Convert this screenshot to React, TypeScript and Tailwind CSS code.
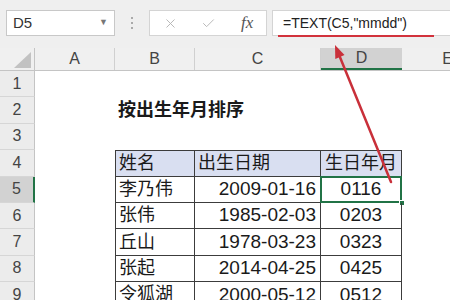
import { X, Check } from 'lucide-react';

const FONT = '"Liberation Sans", "Noto Sans CJK SC", sans-serif';

const COL_W = ['w-[35px]', 'w-[80px]', 'w-[80px]', 'w-[126px]', 'w-[81px]', 'w-[92px]'];
const COL_NAMES = ['', 'A', 'B', 'C', 'D', 'E'];

type Row = { num: number; cells: string[] };

const rows: Row[] = [
  { num: 1, cells: ['', '', '', '', ''] },
  { num: 2, cells: ['', '按出生年月排序', '', '', ''] },
  { num: 3, cells: ['', '', '', '', ''] },
  { num: 4, cells: ['', '姓名', '出生日期', '生日年月', ''] },
  { num: 5, cells: ['', '李乃伟', '2009-01-16', '0116', ''] },
  { num: 6, cells: ['', '张伟', '1985-02-03', '0203', ''] },
  { num: 7, cells: ['', '丘山', '1978-03-23', '0323', ''] },
  { num: 8, cells: ['', '张起', '2014-04-25', '0425', ''] },
  { num: 9, cells: ['', '令狐湖', '2000-05-12', '0512', ''] },
];

function Toolbar() {
  return (
    <div className="h-[48px] bg-[#efefef] flex items-start pt-[10px]">
      <div className="shrink-0 ml-[6px] w-[109px] h-[26px] bg-white border border-[#c8c8c8] flex items-center justify-between pl-[6px] pr-[6px]">
        <span className="text-[15px] text-[#333]">D5</span>
        <span className="text-[9px] text-[#777]">▼</span>
      </div>
      <div className="shrink-0 w-[34px] h-[26px] flex flex-col items-center justify-center gap-[3px]">
        <span className="w-[2px] h-[2px] bg-[#aaa]" />
        <span className="w-[2px] h-[2px] bg-[#aaa]" />
        <span className="w-[2px] h-[2px] bg-[#aaa]" />
      </div>
      <div className="shrink-0 w-[118px] h-[26px] bg-white border border-[#d4d4d4] flex items-center pl-[13px]">
        <X size={15} strokeWidth={1.5} className="text-[#b4b4b4]" />
        <Check size={15} strokeWidth={1.5} className="text-[#b4b4b4] ml-[23px]" />
        <span
          className="ml-[25px] text-[17px] italic text-[#555]"
          style={{ fontFamily: '"Liberation Serif", serif' }}
        >
          fx
        </span>
      </div>
      <div className="relative ml-[5px] flex-1 h-[26px] bg-white border-y border-l border-[#d4d4d4] flex items-center pl-[10px]">
        <span className="text-[14px] text-[#222]">=TEXT(C5,"mmdd")</span>
        <div className="absolute left-[5px] w-[156px] bottom-[-2px] h-[2px] bg-[#d2323c]" />
      </div>
    </div>
  );
}

function ColumnHeader() {
  return (
    <div className="flex h-[23px] bg-[#f0f0f0] border-b border-[#c4c4c4]">
      {COL_NAMES.map((name, i) => {
        if (i === 0) {
          return (
            <div key={i} className={`${COL_W[0]} shrink-0 border-r border-[#c4c4c4] flex items-end justify-end pr-[3px] pb-[2px]`}>
              <svg width="17" height="16" viewBox="0 0 17 16">
                <polygon points="17,0 17,16 0,16" fill="#c2c2c2" />
              </svg>
            </div>
          );
        }
        const selected = name === 'D';
        return (
          <div
            key={i}
            className={`${COL_W[i]} shrink-0 flex items-center justify-center text-[16px] text-[#444] ${
              selected ? 'bg-[#d2d2d2] border-b-2 border-[#217346]' : 'border-r border-[#d0d0d0]'
            }`}
          >
            {name}
          </div>
        );
      })}
    </div>
  );
}

function inTable(r: number, c: number) {
  return r >= 4 && c >= 1 && c <= 3;
}

function SheetRow({ row }: { row: Row }) {
  const r = row.num;
  const selectedRow = r === 5;
  return (
    <div className="flex h-[26.4px]">
      <div
        className={`${COL_W[0]} shrink-0 flex items-center justify-center text-[16px] text-[#444] border-b border-[#d6d6d6] ${
          selectedRow ? 'bg-[#d2d2d2] border-r-2 border-r-[#217346]' : 'bg-[#ececec] border-r border-r-[#c4c4c4]'
        }`}
      >
        {r}
      </div>
      {row.cells.map((text, c) => {
        const table = inTable(r, c);
        const header = r === 4 && table;
        const isTitle = r === 2 && c === 1;
        const numeric = r > 4 && (c === 2 || c === 3);
        const align = c === 2 && r > 4 ? 'justify-end pr-[4px]' : c === 3 ? 'justify-center' : 'justify-start pl-[3px]';
        const borders = table
          ? `border-r border-b border-[#3c3c3c] ${r === 4 ? 'border-t' : ''} ${c === 1 ? 'border-l' : ''}`
          : '';
        return (
          <div
            key={c}
            className={`${COL_W[c + 1]} shrink-0 relative flex items-center whitespace-nowrap text-[#1a1a1a] ${
              numeric ? 'text-[19px]' : 'text-[18px]'
            } ${align} ${borders} ${header ? 'bg-[#d9dff1]' : ''} ${isTitle ? 'font-bold' : ''}`}
          >
            {text}
            {r === 5 && c === 3 && (
              <>
                <div className="absolute left-[-1px] top-[-1px] right-[-1px] bottom-[-1px] border-2 border-[#217346]" />
                <div className="absolute right-[-4px] bottom-[-4px] w-[6px] h-[6px] bg-[#217346] border border-white" />
              </>
            )}
          </div>
        );
      })}
    </div>
  );
}

export default function App() {
  return (
    <div className="relative w-[450px] h-[300px] overflow-hidden bg-white" style={{ fontFamily: FONT }}>
      <Toolbar />
      <ColumnHeader />
      {rows.map(row => (
        <SheetRow key={row.num} row={row} />
      ))}
      <svg className="absolute inset-0 pointer-events-none" width="450" height="300" viewBox="0 0 450 300">
        <line x1="391" y1="182" x2="339.9" y2="57" stroke="#c9303a" strokeWidth="2.5" strokeLinecap="round" />
        <polygon points="335,45 344.5,55.1 335.3,58.9" fill="#c9303a" />
      </svg>
    </div>
  );
}
